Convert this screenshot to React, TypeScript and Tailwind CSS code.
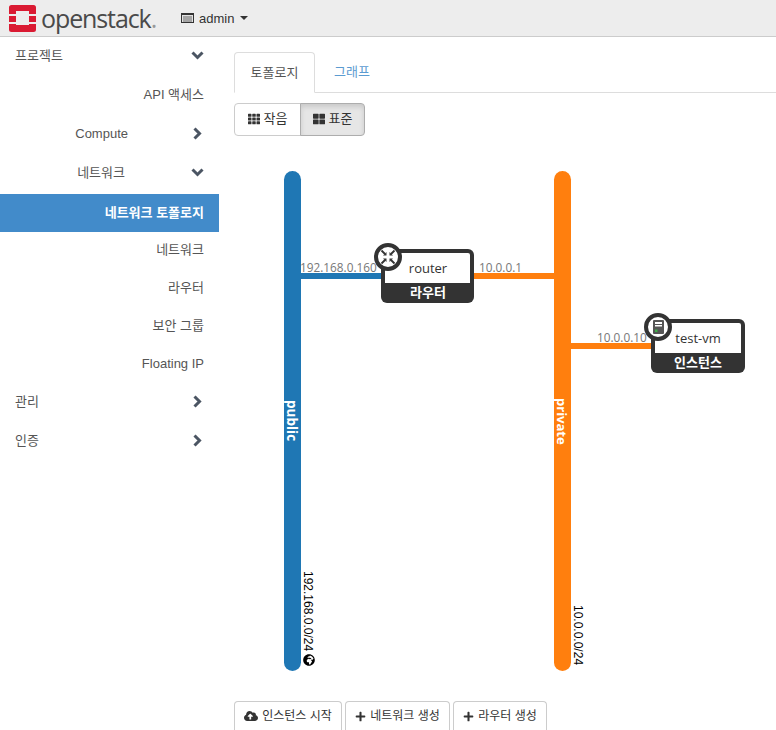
import React from "react";
import { FaTh, FaThLarge, FaPlus, FaCloudUploadAlt, FaGlobeAfrica } from "react-icons/fa";

const font = "font-['Liberation_Sans','Noto_Sans_CJK_KR',sans-serif]";
const labelFont = "'Open Sans','Noto Sans CJK KR',sans-serif";

function Logo() {
  return (
    <svg width="27" height="27" viewBox="0 0 27 27" className="shrink-0">
      <path fill="#da1a32" d="M2.500 0h22a2.500 2.500 0 0 1 2.500 2.500V9h-7V6H7v3H0V2.500A2.500 2.500 0 0 1 2.500 0zM0 11h7v6H0zM20 11h7v6h-7zM0 19h7v1h13v-1h7v5.500a2.500 2.500 0 0 1-2.500 2.500h-22A2.500 2.500 0 0 1 0 24.500z" />
    </svg>
  );
}

function ListIcon() {
  return (
    <svg width="13" height="10" viewBox="0 0 13 10">
      <rect x="0.500" y="0.500" width="12" height="9" fill="#e2e2e2" stroke="#333" strokeWidth="1" />
      <rect x="0" y="0" width="13" height="2" fill="#333" />
      <path d="M2 4h9M2 6h9M2 8h9" stroke="#666" strokeWidth="1" />
    </svg>
  );
}

function Chevron({ open }: { open?: boolean }) {
  return open ? (
    <svg width="13" height="9" viewBox="0 0 13 9" className="shrink-0">
      <path d="M1.500 1.500l5 5 5-5" fill="none" stroke="#4b5563" strokeWidth="3" />
    </svg>
  ) : (
    <svg width="13" height="13" viewBox="0 0 13 13" className="shrink-0">
      <path d="M3.500 1.500l5 5-5 5" fill="none" stroke="#4b5563" strokeWidth="3" />
    </svg>
  );
}

function Top({ label, open }: { label: string; open?: boolean }) {
  return (
    <div className="h-[39px] flex items-center justify-between pl-[15px] pr-[15px] pb-[4px] text-[#555]">
      <span>{label}</span>
      <Chevron open={open} />
    </div>
  );
}

function Mid({ label, open, gap }: { label: string; open?: boolean; gap: string }) {
  return (
    <div className="h-[39px] flex items-center justify-end pr-[15px] pb-[4px] text-[#555]">
      <span className={gap}>{label}</span>
      <Chevron open={open} />
    </div>
  );
}

function Leaf({ label }: { label: string }) {
  return <div className="h-[37.900px] flex items-center justify-end pr-[15px] pb-[3px] text-[#555]">{label}</div>;
}

function Topology() {
  return (
    <svg width="542" height="540" viewBox="234 150 542 540" className="block">
      <rect x="284" y="171" width="17" height="500" rx="8.500" fill="#1f77b4" />
      <rect x="554" y="171" width="17" height="500" rx="8.500" fill="#ff7f0e" />
      <rect x="301" y="273" width="85" height="6" fill="#1f77b4" />
      <rect x="470" y="273" width="84" height="6" fill="#ff7f0e" />
      <rect x="571" y="343" width="85" height="6" fill="#ff7f0e" />

      <g fontFamily={labelFont} fontSize="11.800" fill="#777">
        <text x="300" y="272">192.168.0.160</text>
        <text x="479" y="272">10.0.0.1</text>
        <text x="597" y="342">10.0.0.10</text>
      </g>

      <text transform="translate(287,400) rotate(90)" fontFamily={labelFont} fontSize="13.500" fontWeight="700" fill="#fff">public</text>
      <text transform="translate(557,398) rotate(90)" fontFamily={labelFont} fontSize="13" fontWeight="700" fill="#fff">private</text>
      <text transform="translate(303.500,571) rotate(90)" fontFamily="'Liberation Sans',sans-serif" fontSize="12" fill="#000">192.168.0.0/24</text>
      <text transform="translate(574,605) rotate(90)" fontFamily="'Liberation Sans',sans-serif" fontSize="12" fill="#000">10.0.0.0/24</text>
      <g transform="translate(303,654)"><FaGlobeAfrica size={12} color="#000" /></g>

      {/* router */}
      <g>
        <rect x="381" y="249" width="93" height="54" rx="6" fill="#333" />
        <path d="M387 253h81a2 2 0 0 1 2 2v28h-85v-28a2 2 0 0 1 2-2z" fill="#fff" />
        <text x="428" y="273" textAnchor="middle" fontFamily={labelFont} fontSize="13" fill="#333">router</text>
        <text x="428" y="297" textAnchor="middle" fontFamily={labelFont} fontSize="13" fontWeight="700" fill="#fff">라우터</text>
        <circle cx="388" cy="257" r="12" fill="#fff" stroke="#333" strokeWidth="4" />
        <g stroke="#333" strokeWidth="1.800" fill="none">
          <path d="M381.500 250.500l3.500 3.500M394.500 250.500l-3.500 3.500M381.500 263.500l3.500-3.500M394.500 263.500l-3.500-3.500" />
        </g>
        <g fill="#333">
          <path d="M386.500 255.500v-3.500l-3.500 3.500zM389.500 255.500h3.500l-3.500-3.500zM386.500 258.500h-3.500l3.500 3.500zM389.500 258.500v3.500l3.500-3.500z" />
        </g>
      </g>

      {/* instance */}
      <g>
        <rect x="651" y="319" width="94" height="54" rx="6" fill="#333" />
        <path d="M657 323h82a2 2 0 0 1 2 2v28h-86v-28a2 2 0 0 1 2-2z" fill="#fff" />
        <text x="698" y="343" textAnchor="middle" fontFamily={labelFont} fontSize="13" fill="#333">test-vm</text>
        <text x="698" y="367" textAnchor="middle" fontFamily={labelFont} fontSize="13" fontWeight="700" fill="#fff">인스턴스</text>
        <circle cx="658" cy="327" r="12" fill="#fff" stroke="#333" strokeWidth="4" />
        <rect x="653" y="320" width="11" height="14" rx="1" fill="#555" />
        <rect x="655" y="322" width="7" height="2" fill="#fff" />
        <rect x="655" y="325" width="7" height="1.500" fill="#fff" />
        <rect x="655" y="329.500" width="2.500" height="2.500" fill="#3fae49" />
      </g>
    </svg>
  );
}

const btn = "h-[29px] flex items-center gap-[4px] border border-[#ccc] border-b-0 rounded-t-[4px] bg-white text-[#333] text-[12px]";

export default function App() {
  return (
    <div className={`${font} w-[776px] h-[730px] overflow-hidden bg-white text-[13px] leading-none`}>
      <header className="h-[37px] bg-[#ededed] border-b border-[#ccc] flex items-center pl-[9px]">
        <Logo />
        <span className="ml-[5px] w-[116px] font-['Open_Sans',sans-serif] font-medium text-[25px] tracking-[-1.100px] text-[#4a4a4a]">openstack<span className="text-[#999]">.</span></span>
        <div className="ml-[24px] flex items-center gap-[5px] text-[#333] text-[13px]">
          <ListIcon />
          <span>admin</span>
          <span className="w-0 h-0 ml-[1px] border-x-[4px] border-x-transparent border-t-[4px] border-t-[#333]"></span>
        </div>
      </header>
      <div className="flex">
        <nav className="w-[219px] shrink-0 pt-[1px]">
          <Top label="프로젝트" open />
          <div className="h-[39px] flex items-center justify-end pr-[15px] pb-[4px] text-[#555]">API 액세스</div>
          <Mid label="Compute" gap="mr-[63px]" />
          <Mid label="네트워크" gap="mr-[66px]" open />
          <div className="h-[38px] flex items-center justify-end pr-[15px] pb-[2px] bg-[#428bca] text-white font-bold">네트워크 토폴로지</div>
          <Leaf label="네트워크" />
          <Leaf label="라우터" />
          <Leaf label="보안 그룹" />
          <Leaf label="Floating IP" />
          <Top label="관리" />
          <Top label="인증" />
        </nav>
        <main className="flex-1 pl-[15px] pt-[15px]">
          <div className="h-[41px] flex border-b border-[#ddd]">
            <div className="w-[81px] h-[41px] flex items-center justify-center border border-[#ddd] border-b-white rounded-t-[4px] bg-white text-[#555]">토폴로지</div>
            <div className="ml-[1px] w-[72px] pb-[2px] flex items-center justify-center text-[#5b9bd1]">그래프</div>
          </div>
          <div className="mt-[10px] flex h-[33px] w-[131px]">
            <div className="w-[67px] pb-[2px] flex items-center justify-center gap-[4px] border border-[#ccc] rounded-l-[4px] text-[#333]">
              <FaTh size={12} />작음
            </div>
            <div className="w-[65px] -ml-px pb-[2px] flex items-center justify-center gap-[4px] border border-[#adadad] rounded-r-[4px] bg-[#e6e6e6] text-[#333] shadow-[inset_0_3px_5px_rgba(0,0,0,0.125)]">
              <FaThLarge size={12} />표준
            </div>
          </div>
          <div className="mt-[14px] -mr-px">
            <Topology />
          </div>
          <div className="mt-[11px] flex gap-[3px]">
            <div className={`${btn} w-[108px] justify-center`}><FaCloudUploadAlt size={14} />인스턴스 시작</div>
            <div className={`${btn} w-[105px] justify-center`}><FaPlus size={11} />네트워크 생성</div>
            <div className={`${btn} w-[94px] justify-center`}><FaPlus size={11} />라우터 생성</div>
          </div>
        </main>
      </div>
    </div>
  );
}
